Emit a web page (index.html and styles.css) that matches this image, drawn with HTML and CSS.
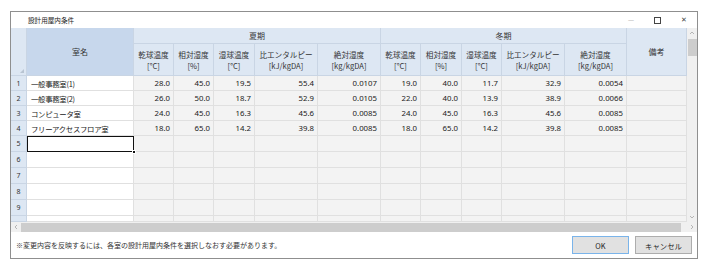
FILE: index.html
```html
<!DOCTYPE html>
<html>
<head>
    <meta charset="utf-8">
    <link rel="stylesheet" href="styles.css">
</head>
<body>
    <div class="window">
        <div class="titlebar">
            <span class="title">設計用屋内条件</span>
            <div class="controls">
                <span class="ctl min">&#8212;</span>
                <span class="ctl max"></span>
                <span class="ctl close">&#10005;</span>
            </div>
        </div>

        <div class="gridarea">
            <div class="sheet">
                <div class="hd corner"><span class="tri"></span></div>
                <div class="hd name-hd">室名</div>
                <div class="hd season summer">夏期</div>
                <div class="hd season winter">冬期</div>
                <div class="hd note-hd">備考</div>

                <div class="hd sub">乾球温度<br>[°C]</div>
                <div class="hd sub">相対湿度<br>[%]</div>
                <div class="hd sub">湿球温度<br>[°C]</div>
                <div class="hd sub">比エンタルピー<br>[kJ/kgDA]</div>
                <div class="hd sub">絶対湿度<br>[kg/kgDA]</div>
                <div class="hd sub">乾球温度<br>[°C]</div>
                <div class="hd sub">相対湿度<br>[%]</div>
                <div class="hd sub">湿球温度<br>[°C]</div>
                <div class="hd sub">比エンタルピー<br>[kJ/kgDA]</div>
                <div class="hd sub">絶対湿度<br>[kg/kgDA]</div>

                <!-- row 1 -->
                <div class="rh">1</div>
                <div class="c name">一般事務室(1)</div>
                <div class="c num">28.0</div><div class="c num">45.0</div><div class="c num">19.5</div><div class="c num">55.4</div><div class="c num">0.0107</div>
                <div class="c num">19.0</div><div class="c num">40.0</div><div class="c num">11.7</div><div class="c num">32.9</div><div class="c num">0.0054</div>
                <div class="c num"></div>
                <!-- row 2 -->
                <div class="rh">2</div>
                <div class="c name">一般事務室(2)</div>
                <div class="c num">26.0</div><div class="c num">50.0</div><div class="c num">18.7</div><div class="c num">52.9</div><div class="c num">0.0105</div>
                <div class="c num">22.0</div><div class="c num">40.0</div><div class="c num">13.9</div><div class="c num">38.9</div><div class="c num">0.0066</div>
                <div class="c num"></div>
                <!-- row 3 -->
                <div class="rh">3</div>
                <div class="c name">コンピュータ室</div>
                <div class="c num">24.0</div><div class="c num">45.0</div><div class="c num">16.3</div><div class="c num">45.6</div><div class="c num">0.0085</div>
                <div class="c num">24.0</div><div class="c num">45.0</div><div class="c num">16.3</div><div class="c num">45.6</div><div class="c num">0.0085</div>
                <div class="c num"></div>
                <!-- row 4 -->
                <div class="rh">4</div>
                <div class="c name">フリーアクセスフロア室</div>
                <div class="c num">18.0</div><div class="c num">65.0</div><div class="c num">14.2</div><div class="c num">39.8</div><div class="c num">0.0085</div>
                <div class="c num">18.0</div><div class="c num">65.0</div><div class="c num">14.2</div><div class="c num">39.8</div><div class="c num">0.0085</div>
                <div class="c num"></div>
                <!-- row 5 (selected) -->
                <div class="rh">5</div>
                <div class="c name selected"><span class="handle"></span></div>
                <div class="c num"></div><div class="c num"></div><div class="c num"></div><div class="c num"></div><div class="c num"></div>
                <div class="c num"></div><div class="c num"></div><div class="c num"></div><div class="c num"></div><div class="c num"></div>
                <div class="c num"></div>
                <!-- rows 6-9 -->
                <div class="rh">6</div>
                <div class="c name"></div>
                <div class="c num"></div><div class="c num"></div><div class="c num"></div><div class="c num"></div><div class="c num"></div>
                <div class="c num"></div><div class="c num"></div><div class="c num"></div><div class="c num"></div><div class="c num"></div>
                <div class="c num"></div>
                <div class="rh">7</div>
                <div class="c name"></div>
                <div class="c num"></div><div class="c num"></div><div class="c num"></div><div class="c num"></div><div class="c num"></div>
                <div class="c num"></div><div class="c num"></div><div class="c num"></div><div class="c num"></div><div class="c num"></div>
                <div class="c num"></div>
                <div class="rh">8</div>
                <div class="c name"></div>
                <div class="c num"></div><div class="c num"></div><div class="c num"></div><div class="c num"></div><div class="c num"></div>
                <div class="c num"></div><div class="c num"></div><div class="c num"></div><div class="c num"></div><div class="c num"></div>
                <div class="c num"></div>
                <div class="rh">9</div>
                <div class="c name"></div>
                <div class="c num"></div><div class="c num"></div><div class="c num"></div><div class="c num"></div><div class="c num"></div>
                <div class="c num"></div><div class="c num"></div><div class="c num"></div><div class="c num"></div><div class="c num"></div>
                <div class="c num"></div>
                <!-- partial row -->
                <div class="rh"></div>
                <div class="c name"></div>
                <div class="c num"></div><div class="c num"></div><div class="c num"></div><div class="c num"></div><div class="c num"></div>
                <div class="c num"></div><div class="c num"></div><div class="c num"></div><div class="c num"></div><div class="c num"></div>
                <div class="c num"></div>
            </div>
            <div class="vscroll">
                <svg class="arr" width="10" height="10" viewBox="0 0 10 10"><path d="M3 6 L5 4 L7 6" fill="none" stroke="#a6a6a6" stroke-width="0.8"/></svg>
                <span class="vthumb"></span>
                <span class="spacer"></span>
                <svg class="arr" width="10" height="10" viewBox="0 0 10 10"><path d="M3 4 L5 6 L7 4" fill="none" stroke="#a6a6a6" stroke-width="0.8"/></svg>
            </div>
        </div>

        <div class="hscroll">
            <svg class="arr" width="10" height="10" viewBox="0 0 10 10"><path d="M6 3 L4 5 L6 7" fill="none" stroke="#a6a6a6" stroke-width="0.8"/></svg>
            <span class="hthumb"></span>
            <svg class="arr" width="10" height="10" viewBox="0 0 10 10"><path d="M4 3 L6 5 L4 7" fill="none" stroke="#a6a6a6" stroke-width="0.8"/></svg>
        </div>

        <div class="footer">
            <span class="msg">※変更内容を反映するには、各室の設計用屋内条件を選択しなおす必要があります。</span>
            <div class="buttons">
                <button class="btn ok">OK</button>
                <button class="btn">キャンセル</button>
            </div>
        </div>
    </div>
</body>
</html>
```

FILE: styles.css
```css
* {
    box-sizing: border-box;
}
body {
    margin: 0;
    background: #fff;
    font-family: "Noto Sans", "Noto Sans CJK JP", sans-serif;
    color: #333;
}
.window {
    margin: 11px 0 0 10px;
    width: 688px;
    height: 248px;
    border: 1px solid #8f8f8f;
    background: #fff;
    display: flex;
    flex-direction: column;
}

/* title bar */
.titlebar {
    height: 16px;
    display: flex;
    align-items: center;
    justify-content: space-between;
    padding-left: 17px;
}
.title {
    font-family: "Noto Sans CJK JP", sans-serif;
    font-size: 6.6px;
    color: #222;
}
.controls {
    display: flex;
    align-items: center;
    height: 16px;
}
.ctl {
    width: 26px;
    text-align: center;
    font-size: 8px;
    color: #333;
    line-height: 16px;
}
.ctl.min {
    color: #aaa;
    font-size: 6px;
}
.ctl.max {
    width: 7px;
    height: 7px;
    border: 1px solid #444;
    margin: 0 10px;
}
.ctl.close {
    font-size: 7px;
    color: #444;
}

/* grid */
.gridarea {
    display: flex;
    height: 194px;
}
.sheet {
    width: 676px;
    display: grid;
    grid-template-columns: 16px 107px 40px 40px 41px 63px 63px 40px 41px 40px 63px 62px 60px;
    grid-template-rows: 16px 32px 15px 15px 15px 15px 16px 16px 16px 16px 16px 6px;
    overflow: hidden;
    font-size: 8px;
}
.hd {
    background: #dde7f3;
    border-right: 1px solid #c9d5e4;
    border-bottom: 1px solid #c9d5e4;
    display: flex;
    align-items: center;
    justify-content: center;
    text-align: center;
    font-family: "Noto Sans CJK JP", sans-serif;
    line-height: 11px;
    color: #333;
}
.corner {
    grid-row: span 2;
    position: relative;
}
.tri {
    position: absolute;
    right: 2px;
    bottom: 2px;
    width: 0;
    height: 0;
    border-left: 4px solid transparent;
    border-bottom: 4px solid #b8c4d2;
}
.name-hd {
    grid-row: span 2;
    background: #c7d7ec;
}
.summer, .winter {
    grid-column: span 5;
}
.note-hd {
    grid-row: span 2;
}
.sub {
    font-size: 7.6px;
}

.rh {
    background: #dde7f3;
    border-right: 1px solid #c9d5e4;
    border-bottom: 1px solid #c9d5e4;
    font-size: 7px;
    display: flex;
    align-items: center;
    justify-content: center;
    color: #333;
}
.c {
    border-right: 1px solid #e0e0e0;
    border-bottom: 1px solid #e0e0e0;
    display: flex;
    align-items: center;
    white-space: nowrap;
    overflow: hidden;
}
.name {
    background: #fff;
    padding-left: 4px;
    font-family: "Noto Sans CJK JP", sans-serif;
    font-size: 7.4px;
    letter-spacing: -0.3px;
    color: #222;
}
.num {
    background: #f3f3f3;
    justify-content: flex-end;
    padding-right: 3px;
    font-size: 7.8px;
    color: #222;
}
.selected {
    border: 1px solid #111;
    overflow: visible;
    position: relative;
}
.handle {
    position: absolute;
    right: -3px;
    bottom: -3px;
    width: 4px;
    height: 4px;
    background: #111;
    border: 1px solid #fff;
}

/* scrollbars */
.vscroll {
    width: 10px;
    background: #f0f0f0;
    display: flex;
    flex-direction: column;
    align-items: center;
}
.vthumb {
    width: 9px;
    height: 17px;
    background: #cdcdcd;
    margin-top: 1px;
}
.spacer {
    flex: 1;
}
.hscroll {
    height: 10px;
    background: #f0f0f0;
    display: flex;
    align-items: center;
}
.hthumb {
    width: 660px;
    height: 9px;
    background: #cdcdcd;
    margin-right: 6px;
}

/* footer */
.footer {
    flex: 1;
    display: flex;
    align-items: center;
    justify-content: space-between;
    padding: 0 5px 0 5px;
}
.msg {
    font-family: "Noto Sans CJK JP", sans-serif;
    font-size: 7px;
    color: #333;
}
.buttons {
    display: flex;
    gap: 6px;
}
.btn {
    width: 57px;
    height: 18px;
    border: 1px solid #adadad;
    background: #e1e1e1;
    font-family: "Noto Sans CJK JP", sans-serif;
    font-size: 7.4px;
    color: #222;
    padding: 0;
}
.btn.ok {
    border-color: #7ab4ea;
}
```
